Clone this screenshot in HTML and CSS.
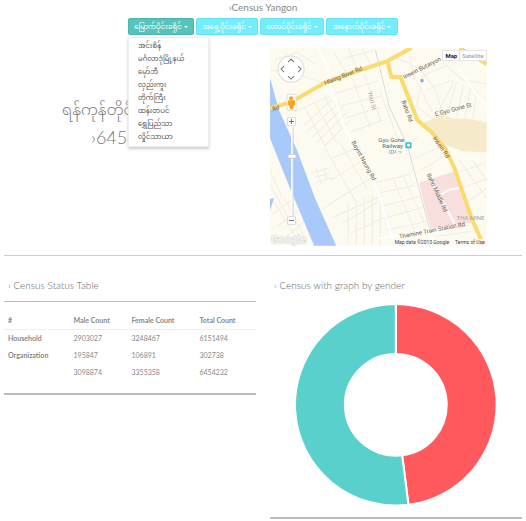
FILE: index.html
```html
<!DOCTYPE html>
<html lang="en">
<head>
<meta charset="utf-8">
<title>Census Yangon</title>
<link rel="stylesheet" href="styles.css">
</head>
<body>
<header class="top">
  <h1 class="site-title">›Census Yangon</h1>
  <nav class="districts" lang="my">
    <div class="district">
      <button class="tab tab-active" type="button" aria-expanded="true">မြောက်ပိုင်းခရိုင် <span class="caret"></span></button>
      <ul class="menu">
        <li><a href="#">အင်းစိန်</a></li>
        <li><a href="#">မင်္ဂလာဒုံမြို့နယ်</a></li>
        <li><a href="#">မှော်ဘီ</a></li>
        <li><a href="#">လှည်းကူး</a></li>
        <li><a href="#">တိုက်ကြီး</a></li>
        <li><a href="#">ထန်းတပင်</a></li>
        <li><a href="#">ရွှေပြည်သာ</a></li>
        <li><a href="#">လှိုင်သာယာ</a></li>
      </ul>
    </div>
    <button class="tab" type="button">အရှေ့ပိုင်းခရိုင် <span class="caret"></span></button>
    <button class="tab" type="button">တောင်ပိုင်းခရိုင် <span class="caret"></span></button>
    <button class="tab" type="button">အနောက်ပိုင်းခရိုင် <span class="caret"></span></button>
  </nav>
</header>
<main>
  <section class="row overview">
    <div class="summary">
      <p class="region" lang="my">ရန်ကုန်တိုင်းဒေသကြီး</p>
      <p class="population">›6454232</p>
    </div>
    <div class="map">
      <svg class="map-art" viewBox="0 0 216 197" role="img" aria-label="Map of northern Yangon">
        <rect width="216" height="197" fill="#fdfaf0"/>
        <path fill="#f5ebcb" d="M150 75l10-3 8-6 14 4 18 1 16 3v30l-24-1-16-6-15-15z"/>
        <path fill="#f8dedd" d="M149 134l35-11 17 52-8 4-34 2z"/>
        <path fill="#a9c9fb" d="M0 30l9 32 18 40 18 48 21 47H44L20 140 0 90zM0 150h4l-4 12z"/>
        <g class="lanes">
          <path d="M5 12l22-8 18 12M0 22l20 2 34 11M63 4l15 24M78 0l10 24M92 0l10 20M75 10l30-8M34 77l28-26M37 83l33-29M42 89l31-30M47 94l30-30M54 98l26-26M35 60l20 38M45 55l22 40M54 47l18 34M24 64l35-16M65 45l43-12M70 58l40-10M75 70l35-11M82 30l18 50M94 27l17 46M80 84l32-12"/>
          <path d="M42 124l16-4M44 129l16-4M46 134l17-5M46 120l5 15M53 119l4 12M60 132l30-18M62 110l28-12M53 160l50-32M62 169l50-22M55 100l30 52M69 93l28 48M72 175l36-22M80 185l38-18M78 155v40M86 152v44M94 149v47M102 146v50M110 155v41M0 122l12 27M0 136l18 33M5 155l22 36M15 150l20 40M3 165l18-13M8 177l20-15M16 188l18-15"/>
          <path d="M126 10l22 10 15 18 12 34M138 2l6 28 18 34M150 28l25-10M155 42l28-10M167 65l16-30M176 68l10-34M186 69l7-32M194 70l6-30M202 71l4-28M154 20l-8 38 16 12M172 14l20 18 24 4M109 42l21 55M123 103l24-14M105 134l34-8M106 145l38-8M110 158l39-10M114 170l41-12M116 182l43-10M122 129l22 52M132 126l23 51M143 110l36-15M150 122l24-14M188 124l28-10M192 139l24-9M196 154l20-14M189 112l27 38M202 112l14 20M165 188l35-5"/>
        </g>
        <g class="streets">
          <path d="M47 0l10 17 4 22 13 40 13 23 15 28 7 17 15 50M104 2l15 57 18 38 22 83 4 17M155 125l14 22 15 28M169 147l10-6 13-2M188 20l16 24 12 14M109 190l50-9 42-6"/>
        </g>
        <path class="rail" d="M105 2l14 57 18 38 22 83"/>
        <path class="main-edge" d="M0 60l21-6 33-19 30-11 33-11 20-11 4-2M117 13l4 16h9l17 43 14 12 13 15 10 21 17 50 12 27M189 0l27 16"/>
        <path class="main-road" d="M0 60l21-6 33-19 30-11 33-11 20-11 4-2M117 13l4 16h9l17 43 14 12 13 15 10 21 17 50 12 27M189 0l27 16"/>
        <g class="labels">
          <text transform="translate(55 37) rotate(-22)">Hlaing River Rd</text>
          <text transform="translate(3 63) rotate(-17)">Rd</text>
          <text transform="translate(134 31) rotate(-27)">Insein Butaryon</text>
          <text transform="translate(165 68) rotate(-15)">E Gyo Gone St</text>
          <text transform="translate(131 53) rotate(70)">Baho Rd</text>
          <text transform="translate(162 90) rotate(55)">Insein Rd</text>
          <text transform="translate(81 94) rotate(61)">Bayint Naung Rd</text>
          <text transform="translate(156 126) rotate(65)">Baho Middle Rd</text>
          <text transform="translate(129 190) rotate(-11)">Thamine Train Station Rd</text>
          <text class="faint" transform="translate(97 44) rotate(75)">Thiri St</text>
          <text class="faint" x="186" y="171">THA MINE</text>
          <text class="station" x="108" y="94">Gyo Gone</text>
          <text class="station" x="112" y="100">Railway</text>
        </g>
        <rect x="135" y="94" width="6" height="6" rx="1" fill="#34bccc"/>
        <path d="M137 96h2v1h-2zM137 98h2" fill="none" stroke="#fff"/>
        <g fill="none" stroke="#70bad2" stroke-width=".7"><path d="M119 102h4v3h-4zM121 102v3M124 105l1-3 1 3M128 103h3M129 105l2-1"/></g>
        <path d="M150 31h3v3h-3z" fill="#80a9e8"/>
        <text class="logo" x="1" y="194">Google</text>
        <g class="pan">
          <circle cx="21" cy="21" r="13" fill="#fff" stroke="#ddd"/>
          <path d="M18 14l3-3 3 3M18 28l3 3 3-3M14 18l-3 3 3 3M28 18l3 3-3 3"/>
        </g>
        <rect x="17" y="46" width="9" height="16" rx="1" fill="#fff" stroke="#ddd"/>
        <g fill="#f4a51c"><circle cx="21" cy="50" r="2"/><path d="M18 52h7v5h-1l-1 4h-3l-1-4h-1z"/></g>
        <path d="M22 76v94" stroke="#fff" stroke-width="2"/>
        <path d="M23 78v90" stroke="#cbd3de"/>
        <rect x="18" y="106" width="8" height="4" rx="1" fill="#fff" stroke="#c9c9c9"/>
      </svg>
      <div class="map-types">
        <button class="map-type map-type-on" type="button">Map</button>
        <button class="map-type" type="button">Satellite</button>
      </div>
      <button class="zoom zoom-in" type="button" aria-label="Zoom in"></button>
      <button class="zoom zoom-out" type="button" aria-label="Zoom out"></button>
      <p class="credits"><span>Map data ©2013 Google</span><a href="#">Terms of Use</a></p>
    </div>
  </section>
  <div class="row details">
    <section class="panel">
      <h2 class="panel-title ruled">› Census Status Table</h2>
      <table class="stats">
        <thead>
          <tr><th scope="col">#</th><th scope="col">Male Count</th><th scope="col">Female Count</th><th scope="col">Total Count</th></tr>
        </thead>
        <tbody>
          <tr><th scope="row">Household</th><td>2903027</td><td>3248467</td><td>6151494</td></tr>
          <tr><th scope="row">Organization</th><td>195847</td><td>106891</td><td>302738</td></tr>
          <tr><td></td><td>3098874</td><td>3355358</td><td>6454232</td></tr>
        </tbody>
      </table>
    </section>
    <section class="panel">
      <h2 class="panel-title">› Census with graph by gender</h2>
      <svg class="donut" viewBox="-101 -101 202 202" role="img" aria-label="Census by gender">
        <g stroke="#fff" stroke-width="2">
          <path fill="#ff595e" d="M0-101A101 101 0 0 1 12.7 100.2L6.4 50.6A51 51 0 0 0 0-51z"/>
          <path fill="#5ad0cd" d="M12.7 100.2A101 101 0 1 1 0-101V-51A51 51 0 1 0 6.4 50.6z"/>
        </g>
      </svg>
    </section>
  </div>
</main>
</body>
</html>
```
FILE: styles.css
```css
* { box-sizing: border-box; }
body {
  margin: 0;
  padding: 0 4px;
  background: #fff;
  color: #777;
  font-family: Lato, "Noto Sans Myanmar", sans-serif;
  font-weight: 300;
}
h1, h2, p, ul { margin: 0; padding: 0; }
button { font-family: inherit; border: 0; padding: 0; }
a { color: inherit; text-decoration: none; }

.site-title {
  height: 18px;
  line-height: 15px;
  font-size: 10px;
  font-weight: 400;
  color: #888;
  text-align: center;
}
.districts {
  display: grid;
  grid-template-columns: 66px 62px 64px 72px;
  gap: 2px;
  justify-content: center;
}
.district { position: relative; display: grid; }
.tab {
  display: flex;
  align-items: center;
  justify-content: center;
  gap: 2px;
  height: 17px;
  border: 1px solid #66e3f3;
  border-radius: 2px;
  background: #72edfd;
  color: #fff;
  font-size: 7px;
  line-height: 15px;
  white-space: nowrap;
}
.tab-active { background: #56c4bd; border-color: #49b5ae; }
.caret { border: 2px solid transparent; border-top-color: #fff; border-bottom: 0; }
.menu {
  position: absolute;
  z-index: 2;
  top: 19px;
  left: 0;
  width: 81px;
  padding: 1px 0 3px 9px;
  list-style: none;
  background: #fff;
  border: 1px solid #eee;
  box-shadow: 0 2px 3px #ccc;
  font-size: 7px;
  font-weight: 400;
  line-height: 13px;
  color: #555;
  white-space: nowrap;
}

.row { display: grid; grid-template-columns: 1fr 1fr; column-gap: 14px; }
.overview { padding: 13px 0 9px; border-bottom: 1px solid #ccc; }
.summary {
  padding-top: 47px;
  text-align: center;
  line-height: 28px;
  white-space: nowrap;
}
.region { font-size: 15px; }
.population { font-size: 18px; }
.map { position: relative; width: 86%; }
.map-art { display: block; width: 100%; }
.map-art text { font-family: Roboto, sans-serif; font-size: 6px; }
.lanes { fill: none; stroke: #f0ede5; stroke-width: 1; }
.streets { fill: none; stroke: #fff; stroke-width: 2; }
.rail { fill: none; stroke: #ddd9d0; stroke-width: 1; }
.main-edge { fill: none; stroke: #f3d98b; stroke-width: 4; }
.main-road { fill: none; stroke: #fddb69; stroke-width: 3; }
.labels { fill: #665c4d; font-weight: 400; }
.labels .faint { fill: #aaa397; }
.labels .station { fill: #3b7180; }
.map-art .logo { font-size: 11px; font-weight: 700; fill: #f3f3f3; stroke: #d3d3d3; stroke-width: 1; paint-order: stroke; }
.pan { fill: none; stroke: #777; stroke-width: 1; }
.map-types {
  position: absolute;
  top: 2px;
  right: 0;
  display: flex;
  height: 11px;
  background: #fff;
  border: 1px solid #e5e5e5;
}
.map-type {
  padding: 0 2px;
  background: #fff;
  color: #999;
  font: 6px/9px Roboto, sans-serif;
}
.map-type-on { color: #222; font-weight: 700; border-right: 1px solid #ddd; }
.zoom {
  position: absolute;
  left: 8%;
  width: 9px;
  height: 9px;
  background: linear-gradient(#777, #777) center / 5px 1px no-repeat, #fff;
  border: 1px solid #ddd;
  border-radius: 1px;
}
.zoom-in {
  top: 35%;
  background: linear-gradient(#777, #777) center / 5px 1px no-repeat, linear-gradient(#777, #777) center / 1px 5px no-repeat, #fff;
}
.zoom-out { top: 85%; }
.credits {
  position: absolute;
  right: 0;
  bottom: 0;
  display: flex;
  gap: 6px;
  padding: 0 2px 1px;
  background: #fdfaf0cc;
  color: #444;
  font: 5px/6px Roboto, sans-serif;
}

.details { padding-top: 20px; align-items: start; }
.panel { border-bottom: 2px solid #bbb; }
.panel-title {
  padding: 0 4px;
  height: 26px;
  font-size: 10px;
  line-height: 19px;
  font-weight: 300;
  color: #666;
}
.ruled { border-bottom: 1px solid #bbb; }
.stats {
  width: 100%;
  margin: 11px 0 12px;
  border-collapse: collapse;
  table-layout: fixed;
  text-align: left;
  font-size: 7px;
  line-height: 9px;
}
.stats th, .stats td { height: 17px; padding: 0 4px; font-weight: 400; color: #888; }
.stats th { font-weight: 700; }
.stats thead th { border-bottom: 1px solid #eee; }
.stats th:nth-child(1) { width: 26%; }
.stats th:nth-child(2) { width: 23%; }
.stats th:nth-child(3) { width: 27%; }
.donut { display: block; width: 80%; margin: 2px auto 12px; }
```
